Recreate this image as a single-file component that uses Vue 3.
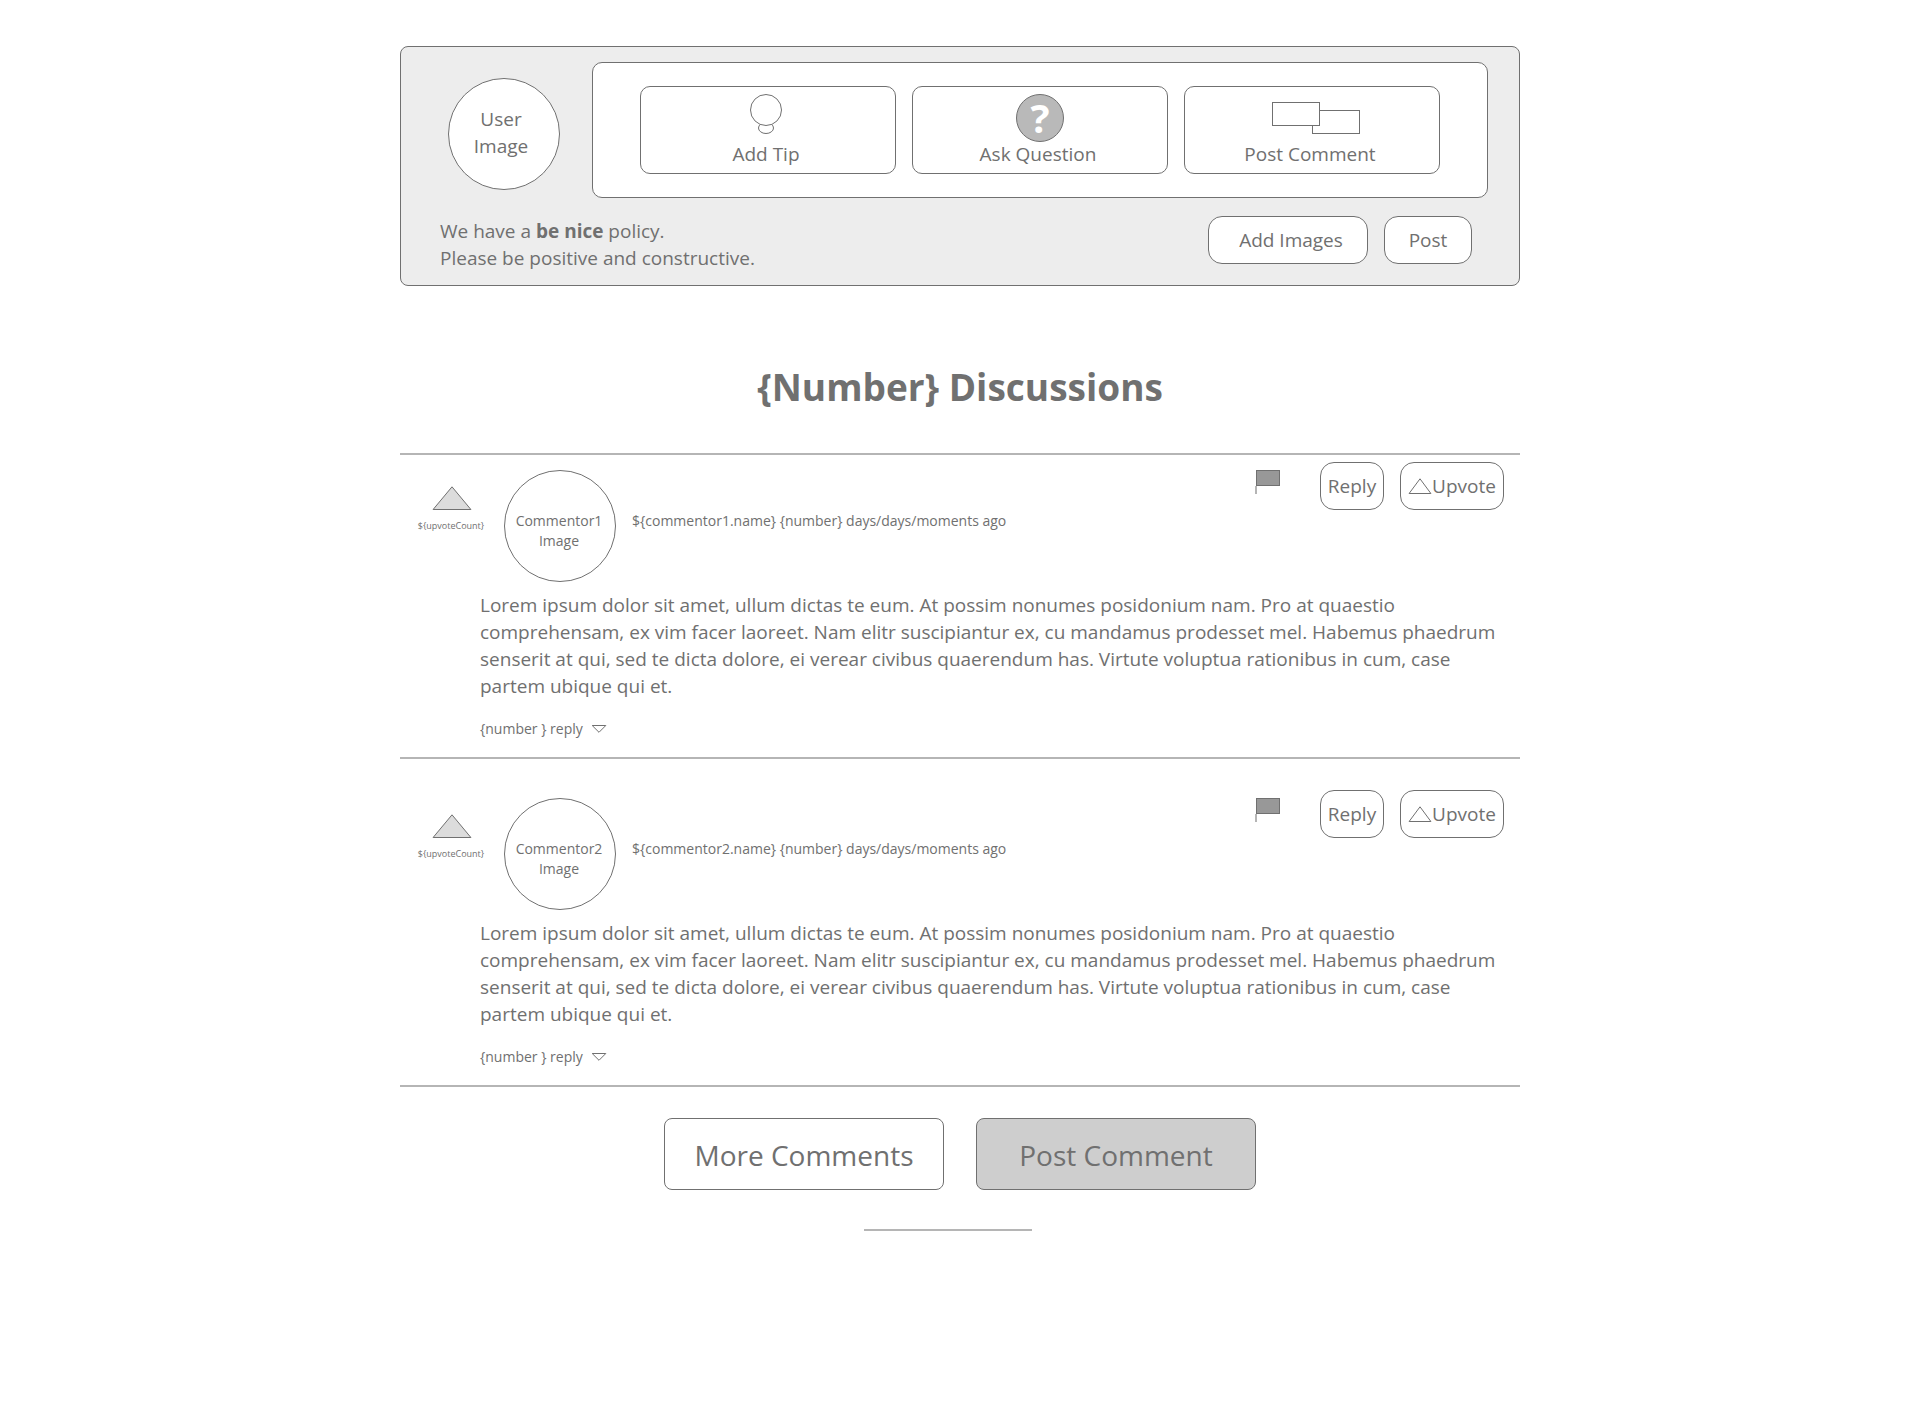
<script setup>
const lorem =
  'Lorem ipsum dolor sit amet, ullum dictas te eum. At possim nonumes posidonium nam. Pro at quaestio comprehensam, ex vim facer laoreet. Nam elitr suscipiantur ex, cu mandamus prodesset mel. Habemus phaedrum senserit at qui, sed te dicta dolore, ei verear civibus quaerendum has. Virtute voluptua rationibus in cum, case partem ubique qui et.'

const comments = [
  { id: 1, avatar: 'Commentor1', byline: '${commentor1.name} {number} days/days/moments ago', text: lorem },
  { id: 2, avatar: 'Commentor2', byline: '${commentor2.name} {number} days/days/moments ago', text: lorem },
]
const upvoteCount = '${upvoteCount}'
const replyCount = '{number } reply'
const heading = '{Number} Discussions'
</script>

<template>
  <main class="page">
    <form class="composer" @submit.prevent>
      <div class="composer-top">
        <div class="avatar user-avatar"><span>User<br />Image</span></div>
        <div class="options">
          <button type="button" class="option">
            <svg width="96" height="48" viewBox="0 0 96 48" aria-hidden="true">
              <ellipse cx="46" cy="34" rx="7.5" ry="5.5" />
              <circle cx="46" cy="16" r="15.5" />
            </svg>
            <span class="option-label">Add Tip</span>
          </button>
          <button type="button" class="option">
            <span class="badge" aria-hidden="true">?</span>
            <span class="option-label">Ask Question</span>
          </button>
          <button type="button" class="option">
            <svg width="96" height="48" viewBox="0 0 96 48" aria-hidden="true">
              <rect x="48.5" y="16.5" width="47" height="23" />
              <rect x="8.5" y="8.5" width="47" height="23" />
            </svg>
            <span class="option-label">Post Comment</span>
          </button>
        </div>
      </div>
      <div class="composer-bottom">
        <p class="policy">We have a <strong>be nice</strong> policy.<br />Please be positive and constructive.</p>
        <button type="button" class="pill add-images">Add Images</button>
        <button type="submit" class="pill post">Post</button>
      </div>
    </form>

    <h1 class="heading">{{ heading }}</h1>

    <section class="comments">
      <article v-for="c in comments" :key="c.id" class="comment">
        <header class="comment-head">
          <div class="votes">
            <svg width="40" height="24" viewBox="0 0 40 24" aria-hidden="true">
              <path class="vote-arrow" d="M20 .8 38.9 23.5H1.1Z" />
            </svg>
            <span class="vote-count">{{ upvoteCount }}</span>
          </div>
          <div class="avatar commenter-avatar"><span>{{ c.avatar }}<br />Image</span></div>
          <p class="byline">{{ c.byline }}</p>
          <button type="button" class="flag" aria-label="Flag comment">
            <svg width="25" height="24" viewBox="0 0 25 24" aria-hidden="true">
              <rect class="flag-pole" x="0" y="16" width="2" height="8" />
              <rect class="flag-cloth" x="1.5" y=".5" width="23" height="15" />
            </svg>
          </button>
          <button type="button" class="pill reply">Reply</button>
          <button type="button" class="pill upvote">
            <svg width="24" height="16" viewBox="0 0 24 16" aria-hidden="true">
              <path d="M12 .8 22.9 15.5H1.1Z" />
            </svg>
            Upvote
          </button>
        </header>
        <p class="comment-text">{{ c.text }}</p>
        <button type="button" class="replies">
          {{ replyCount }}
          <svg width="16" height="8" viewBox="0 0 16 8" aria-hidden="true">
            <path d="M1.2 .5H14.8L8 7.3Z" />
          </svg>
        </button>
      </article>
    </section>

    <footer class="footer">
      <button type="button" class="big">More Comments</button>
      <button type="button" class="big primary">Post Comment</button>
    </footer>
    <hr class="end-rule" />
  </main>
</template>

<style>
body {
  margin: 0;
  background: #fff;
}
</style>

<style scoped>
.page {
  box-sizing: border-box;
  max-width: 1120px;
  margin: 0 auto;
  padding: 46px 0;
  color: #707070;
  font: 19px/27px "Open Sans", "Noto Sans", sans-serif;
}
.page * {
  box-sizing: border-box;
}
button {
  margin: 0;
  padding: 0;
  border: 1px solid #707070;
  background: #fff;
  color: inherit;
  font: inherit;
  cursor: pointer;
}
p {
  margin: 0;
}
svg {
  display: block;
  flex: none;
  fill: #fff;
  stroke: #707070;
}
.composer {
  padding: 15px 31px 13px;
  border: 1px solid #707070;
  border-radius: 8px;
  background: #ededed;
}
.composer-top {
  display: flex;
  align-items: flex-start;
  gap: 32px;
  padding-left: 16px;
}
.avatar {
  display: flex;
  flex: none;
  align-items: center;
  justify-content: center;
  width: 112px;
  height: 112px;
  border: 1px solid #707070;
  border-radius: 50%;
  background: #fff;
  text-align: center;
}
.user-avatar {
  margin-top: 16px;
  padding: 0 6px 2px 0;
}
.options {
  display: flex;
  flex: 1;
  gap: 16px;
  padding: 23px 47px;
  border: 1px solid #707070;
  border-radius: 10px;
  background: #fff;
}
.option {
  display: flex;
  flex: 1;
  flex-direction: column;
  align-items: center;
  height: 88px;
  padding-top: 7px;
  border-radius: 10px;
}
.option-label {
  padding-right: 4px;
  line-height: 24px;
}
.badge {
  width: 48px;
  height: 48px;
  border: 1px solid #707070;
  border-radius: 50%;
  background: #b9b9b9;
  color: #fff;
  font-size: 40px;
  font-weight: 700;
  line-height: 46px;
  text-align: center;
}
.composer-bottom {
  display: flex;
  align-items: flex-start;
  gap: 16px;
  margin-top: 18px;
  padding: 0 16px 0 8px;
}
.policy {
  flex: 1;
  padding-top: 2px;
}
.pill {
  height: 48px;
  border-radius: 14px;
}
.add-images {
  width: 160px;
  padding-left: 6px;
}
.post {
  width: 88px;
}
.heading {
  margin: 77px 0 42px;
  font-size: 37px;
  line-height: 48px;
  text-align: center;
}
.comments {
  border-top: 2px solid #b5b5b5;
}
.comment {
  padding: 31px 16px 18px;
  border-bottom: 2px solid #b5b5b5;
}
.comment:first-child {
  padding-top: 7px;
}
.comment-head {
  display: flex;
  align-items: flex-start;
  gap: 16px;
}
.votes {
  display: flex;
  flex-direction: column;
  align-items: center;
  width: 72px;
  margin-top: 24px;
}
.vote-arrow {
  fill: #dcdcdc;
}
.vote-count {
  margin: 10px 2px 0 0;
  font-size: 9px;
  line-height: 12px;
}
.commenter-avatar {
  margin-top: 8px;
  padding: 10px 2px 0 0;
  font-size: 14px;
  line-height: 20px;
}
.byline {
  flex: 1;
  margin-top: 49px;
  font-size: 14px;
  line-height: 20px;
}
.flag {
  margin: 8px 24px 0 0;
  border: 0;
  background: none;
}
.flag-cloth {
  fill: #989898;
}
.flag-pole {
  fill: #b5b5b5;
  stroke: none;
}
.reply {
  width: 64px;
}
.upvote {
  display: flex;
  align-items: center;
  justify-content: center;
  width: 104px;
}
.comment-text {
  margin: 10px 0 19px 64px;
}
.replies {
  display: flex;
  align-items: center;
  gap: 8px;
  margin-left: 64px;
  border: 0;
  background: none;
  font-size: 14px;
  line-height: 20px;
}
.footer {
  display: flex;
  justify-content: center;
  gap: 32px;
  margin-top: 31px;
}
.big {
  width: 280px;
  height: 72px;
  padding-top: 2px;
  border-radius: 8px;
  font-size: 28px;
  line-height: 40px;
}
.primary {
  background: #cecece;
}
.end-rule {
  width: 168px;
  height: 2px;
  margin: 39px 0 0 calc(50% - 96px);
  border: 0;
  background: #b5b5b5;
}
</style>
